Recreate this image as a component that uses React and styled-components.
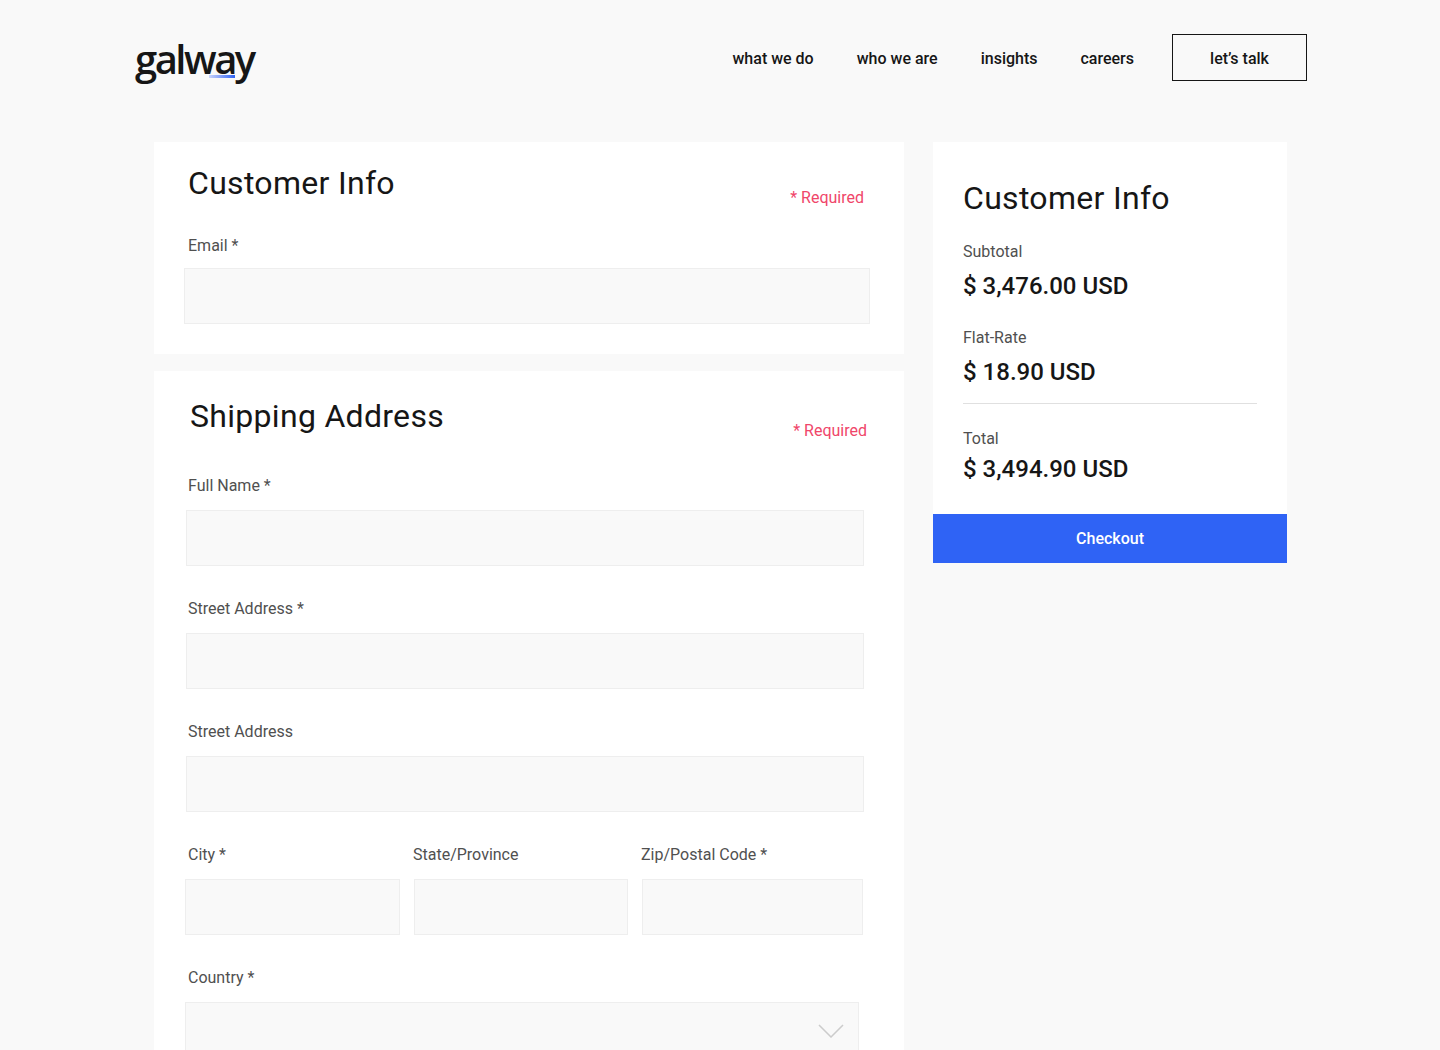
import React from "react";
import styled, { createGlobalStyle } from "styled-components";

const Global = createGlobalStyle`
  body {
    margin: 0;
    background: #f9f9f9;
    font-family: Roboto, "Noto Sans", sans-serif;
    color: #161616;
  }
`;

const Header = styled.header`
  display: flex;
  align-items: center;
  justify-content: space-between;
  padding: 35px 133px 0 135px;
  height: 45px;
`;

const Logo = styled.div`
  position: relative;
  font-family: "Open Sans", sans-serif;
  font-size: 40px;
  font-weight: 600;
  letter-spacing: -2.5px;
  line-height: 1;
  margin-top: 2px;
  span {
    position: absolute;
    left: 74px;
    bottom: 1px;
    width: 26px;
    height: 3px;
    background: linear-gradient(90deg, #c9d4fb, #2f63f5);
  }
`;

const Nav = styled.nav`
  display: flex;
  align-items: center;
  gap: 43px;
  a {
    font-size: 16px;
    font-weight: 500;
    color: #161616;
    text-decoration: none;
    padding-top: 2px;
  }
`;

const TalkButton = styled.a`
  margin-left: -5px;
  width: 133px;
  height: 43px;
  border: 1px solid #161616;
  display: flex;
  align-items: center;
  justify-content: center;
`;

const Main = styled.main`
  display: grid;
  grid-template-columns: 750px 354px;
  gap: 29px;
  padding: 62px 0 0 154px;
`;

const Column = styled.div`
  display: flex;
  flex-direction: column;
  gap: 17px;
`;

const Card = styled.section`
  background: #fff;
  padding: ${(p) => p.$pad || "22px 34px 30px 34px"};
`;

const CardHead = styled.div`
  display: flex;
  justify-content: space-between;
  align-items: flex-start;
  margin-bottom: ${(p) => p.$mb ?? 30}px;
`;

const Title = styled.h2`
  margin: 0;
  font-size: 32px;
  font-weight: 400;
  letter-spacing: 0.3px;
`;

const Required = styled.span`
  color: #f0466a;
  font-size: 16px;
  margin-top: 24px;
`;

const Field = styled.div`
  display: flex;
  flex-direction: column;
  margin-bottom: ${(p) => p.$mb ?? 33}px;
`;

const Label = styled.label`
  font-size: 16px;
  color: #505050;
  margin: 0 0 15px ${(p) => p.$ml ?? 0}px;
`;

const Input = styled.div`
  height: 54px;
  background: #f9f9f9;
  border: 1px solid #eeeeee;
  margin-left: ${(p) => p.$ml ?? -4}px;
  margin-right: ${(p) => p.$mr ?? 0}px;
  position: relative;
`;

const Row = styled.div`
  display: grid;
  grid-template-columns: 215px 215px 222px;
  gap: 13px;
  margin-left: -3px;
`;

const Chevron = styled.svg`
  position: absolute;
  right: 14px;
  top: 21px;
`;

const SumLabel = styled.div`
  font-size: 16px;
  color: #505050;
  margin-bottom: ${(p) => p.$mb ?? 11}px;
`;

const SumValue = styled.div`
  font-size: 24px;
  font-weight: 500;
  margin-bottom: ${(p) => p.$mb ?? 28}px;
`;

const Rule = styled.hr`
  border: none;
  border-top: 1px solid #e0e0e0;
  margin: 17px 0 25px 0;
`;

const Checkout = styled.button`
  width: 100%;
  height: 49px;
  border: none;
  background: #2f63f5;
  color: #fff;
  font-family: inherit;
  font-size: 16px;
  font-weight: 500;
`;

export default function App() {
  return (
    <>
      <Global />
      <Header>
        <Logo>
          galway<span />
        </Logo>
        <Nav>
          <a href="#">what we do</a>
          <a href="#">who we are</a>
          <a href="#">insights</a>
          <a href="#">careers</a>
          <TalkButton href="#">let’s talk</TalkButton>
        </Nav>
      </Header>
      <Main>
        <Column>
          <Card $pad="22px 40px 30px 34px">
            <CardHead $mb={29}>
              <Title>Customer Info</Title>
              <Required>* Required</Required>
            </CardHead>
            <Field $mb={0}>
              <Label style={{ marginBottom: 13 }}>Email *</Label>
              <Input $mr={-6} />
            </Field>
          </Card>
          <Card $pad="26px 37px 0 34px">
            <CardHead $mb={36}>
              <Title style={{ marginLeft: 2 }}>Shipping Address</Title>
              <Required>* Required</Required>
            </CardHead>
            <Field>
              <Label>Full Name *</Label>
              <Input $ml={-2} $mr={3} />
            </Field>
            <Field>
              <Label>Street Address *</Label>
              <Input $ml={-2} $mr={3} />
            </Field>
            <Field>
              <Label>Street Address</Label>
              <Input $ml={-2} $mr={3} />
            </Field>
            <Row>
              <Field>
                <Label $ml={3}>City *</Label>
                <Input $ml={0} />
              </Field>
              <Field>
                <Label>State/Province</Label>
                <Input $ml={1} />
              </Field>
              <Field>
                <Label>Zip/Postal Code *</Label>
                <Input $ml={1} />
              </Field>
            </Row>
            <Field $mb={20}>
              <Label>Country *</Label>
              <Input $ml={-3} $mr={8}>
                <Chevron width="26" height="14" viewBox="0 0 26 14">
                  <path d="M1 1l12 12L25 1" fill="none" stroke="#cccccc" strokeWidth="1.5" />
                </Chevron>
              </Input>
            </Field>
          </Card>
        </Column>
        <div>
          <Card $pad="37px 30px 31px 30px">
            <Title style={{ marginBottom: 25 }}>Customer Info</Title>
            <SumLabel>Subtotal</SumLabel>
            <SumValue>$ 3,476.00 USD</SumValue>
            <SumLabel>Flat-Rate</SumLabel>
            <SumValue $mb={0}>$ 18.90 USD</SumValue>
            <Rule />
            <SumLabel $mb={7}>Total</SumLabel>
            <SumValue $mb={0}>$ 3,494.90 USD</SumValue>
          </Card>
          <Checkout>Checkout</Checkout>
        </div>
      </Main>
    </>
  );
}
